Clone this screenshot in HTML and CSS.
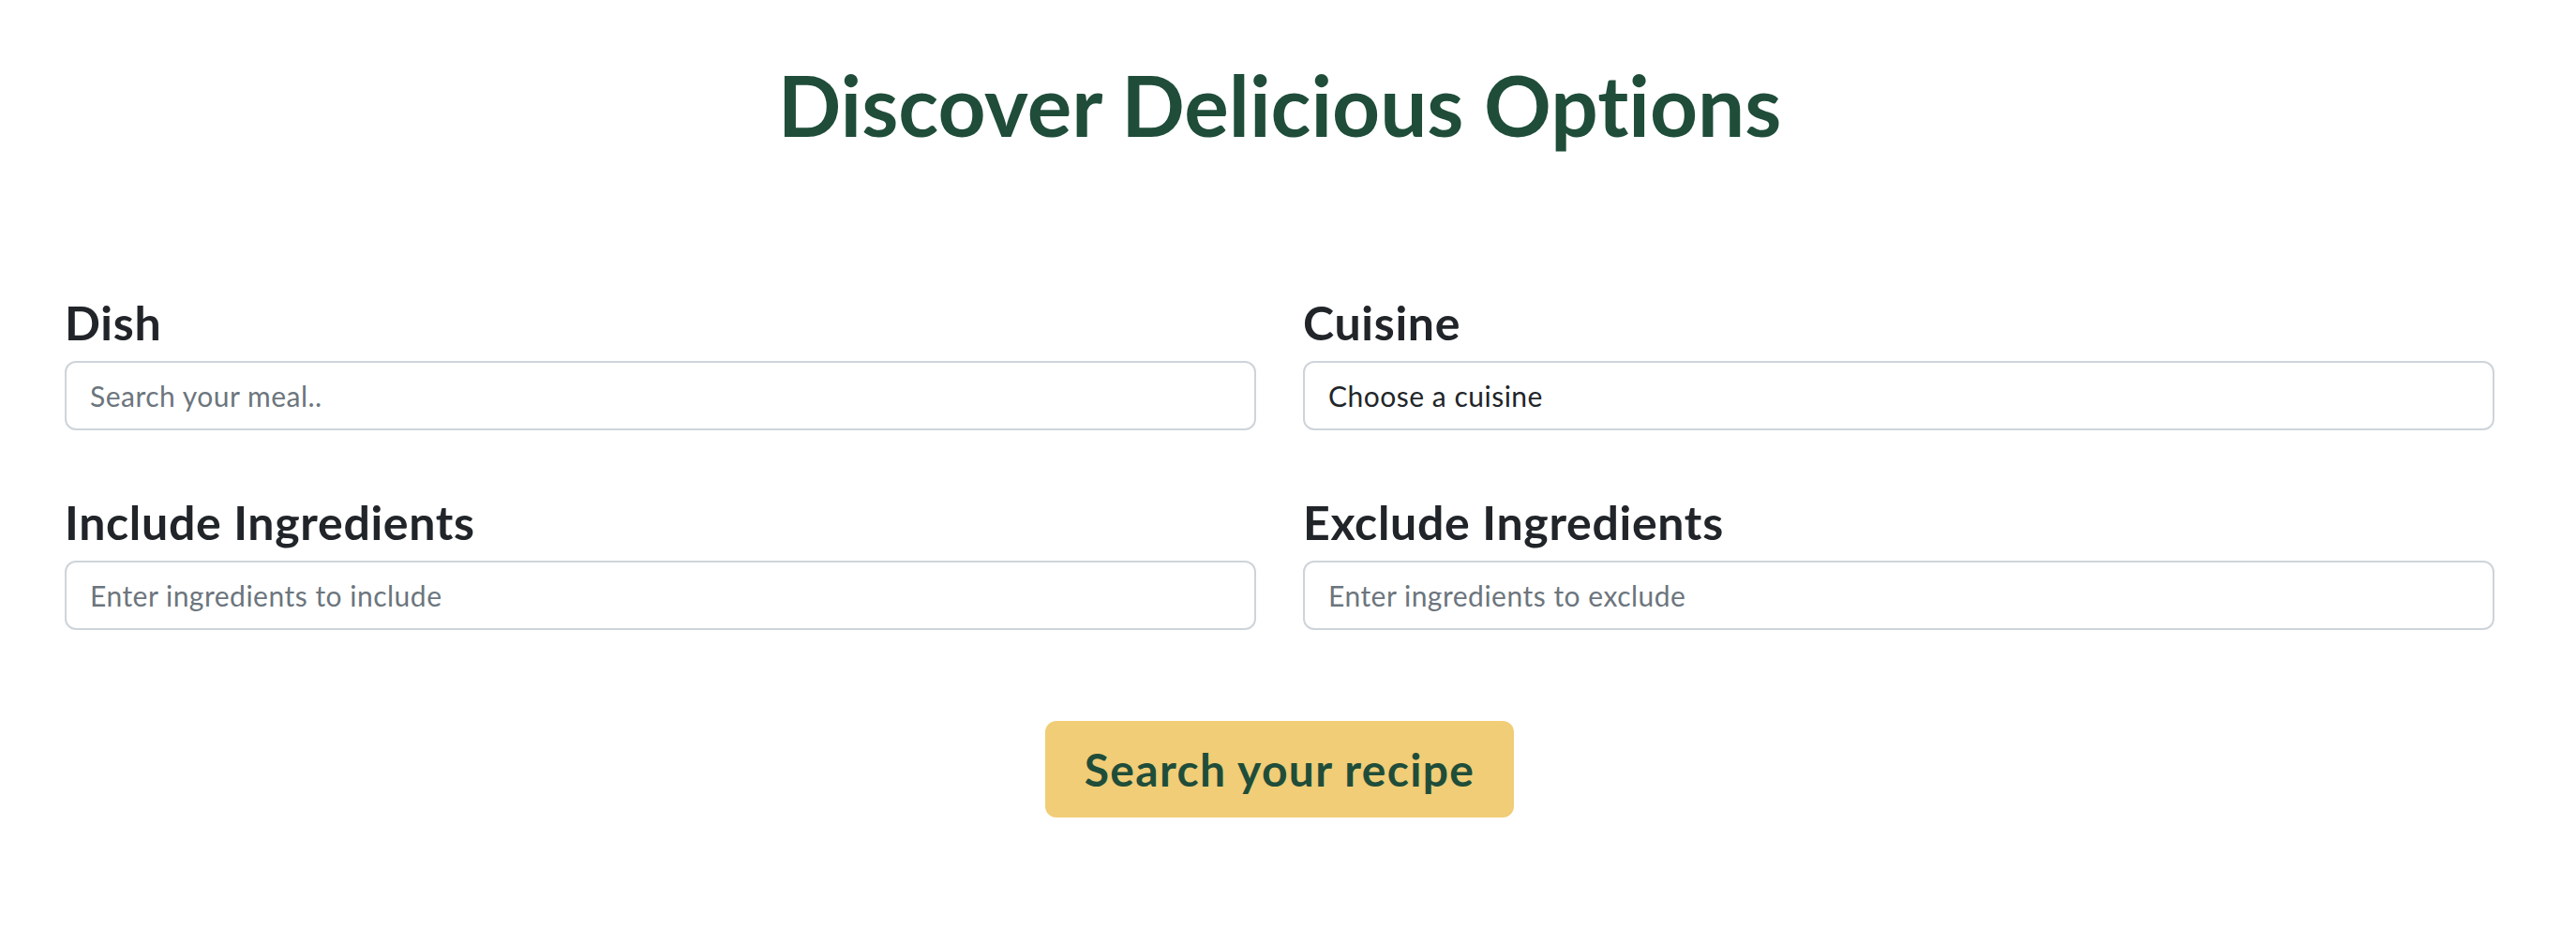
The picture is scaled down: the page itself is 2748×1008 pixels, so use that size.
FILE: index.html
```html
<!DOCTYPE html>
<html lang="en">
<head>
<meta charset="utf-8">
<title>Discover Delicious Options</title>
<link rel="stylesheet" href="styles.css">
</head>
<body>
<main class="page">
  <h1 class="title">Discover Delicious Options</h1>
  <form class="search-form">
    <div class="grid">
      <div class="field">
        <label class="label" for="dish">Dish</label>
        <input class="control" id="dish" type="text" placeholder="Search your meal..">
      </div>
      <div class="field">
        <label class="label" for="cuisine">Cuisine</label>
        <select class="control select" id="cuisine">
          <option>Choose a cuisine</option>
        </select>
      </div>
      <div class="field">
        <label class="label" for="include">Include Ingredients</label>
        <input class="control" id="include" type="text" placeholder="Enter ingredients to include">
      </div>
      <div class="field">
        <label class="label" for="exclude">Exclude Ingredients</label>
        <input class="control" id="exclude" type="text" placeholder="Enter ingredients to exclude">
      </div>
    </div>
    <div class="actions">
      <button class="btn" type="button">Search your recipe</button>
    </div>
  </form>
</main>
</body>
</html>
```
FILE: styles.css
```css
* { box-sizing: border-box; }

html, body {
  margin: 0;
  padding: 0;
  background: #ffffff;
}

body {
  font-family: "Lato", "Liberation Sans", sans-serif;
  font-variant-ligatures: none;
  color: #212529;
  line-height: 1.2;
}

.page {
  width: 2592px;
  margin-left: 69px;
  padding-top: 59px;
}

.title {
  margin: 0;
  text-align: center;
  font-size: 89px;
  font-weight: 700;
  line-height: 1.2;
  color: #1f4d3a;
  letter-spacing: 0;
}

.search-form {
  margin-top: 148px;
}

.grid {
  display: grid;
  grid-template-columns: 1fr 1fr;
  column-gap: 50px;
  row-gap: 68px;
}

.field {
  display: flex;
  flex-direction: column;
}

.label {
  font-size: 50px;
  font-weight: 700;
  line-height: 1.2;
  color: #212529;
  margin-bottom: 11px;
  letter-spacing: 0.7px;
}

.control {
  display: block;
  width: 100%;
  height: 74px;
  padding: 0 25px;
  border: 2px solid #ced4da;
  border-radius: 12px;
  background: #ffffff;
  font-family: "Lato", "Liberation Sans", sans-serif;
  font-variant-ligatures: none;
  font-size: 30px;
  line-height: 1.2;
  letter-spacing: 0.5px;
  color: #212529;
  outline: none;
}

.control::placeholder {
  color: #6c757d;
  opacity: 1;
}

.select {
  appearance: none;
  -webkit-appearance: none;
}

.actions {
  display: flex;
  justify-content: center;
  margin-top: 97px;
}

.btn {
  height: 103px;
  padding: 0 42px;
  border: none;
  border-radius: 12px;
  background: #f0cd76;
  color: #1f4d3a;
  font-family: "Lato", "Liberation Sans", sans-serif;
  font-variant-ligatures: none;
  font-size: 48px;
  font-weight: 700;
  line-height: 1.2;
  letter-spacing: 1.3px;
  cursor: pointer;
}
```
